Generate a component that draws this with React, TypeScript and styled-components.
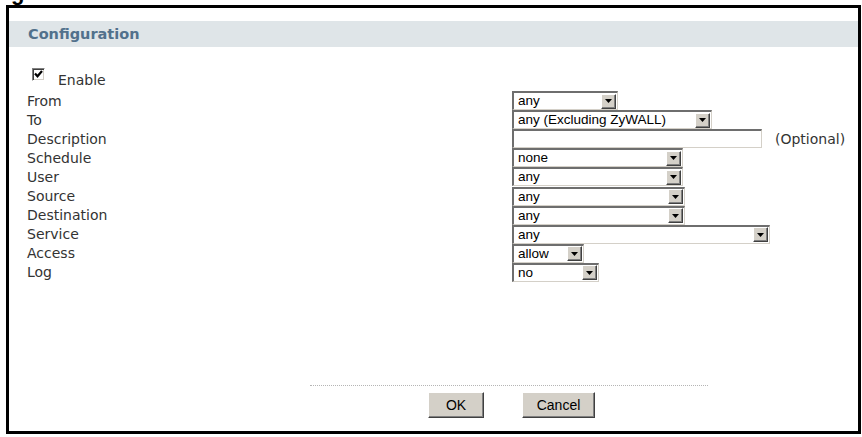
import React from 'react'
import styled, { createGlobalStyle } from 'styled-components'

interface IRow {
  label: string
  kind: 'select' | 'input'
  value?: string
  width: number
}

const rows: IRow[] = [
  { label: 'From', kind: 'select', value: 'any', width: 106 },
  { label: 'To', kind: 'select', value: 'any (Excluding ZyWALL)', width: 200 },
  { label: 'Description', kind: 'input', width: 250 },
  { label: 'Schedule', kind: 'select', value: 'none', width: 171 },
  { label: 'User', kind: 'select', value: 'any', width: 171 },
  { label: 'Source', kind: 'select', value: 'any', width: 173 },
  { label: 'Destination', kind: 'select', value: 'any', width: 173 },
  { label: 'Service', kind: 'select', value: 'any', width: 258 },
  { label: 'Access', kind: 'select', value: 'allow', width: 72 },
  { label: 'Log', kind: 'select', value: 'no', width: 87 },
]

const SelectBox: React.FC<{ value: string; width: number }> = ({ value, width }) => {
  return (
    <StyledSelect width={width}>
      <SelectText>{value}</SelectText>
      <ArrowButton>
        <svg width="7" height="4" viewBox="0 0 7 4">
          <path d="M0 0h7L3.5 4z" fill="#000" />
        </svg>
      </ArrowButton>
    </StyledSelect>
  )
}

const App: React.FC = () => {
  return (
    <>
      <GlobalStyle />
      <Caption>
        <span>g</span>
      </Caption>
      <Frame>
        <Header>Configuration</Header>
        <EnableRow>
          <CheckBox>
            <svg width="9" height="9" viewBox="0 0 9 9">
              <path d="M1 3.5l2.5 2.8L8 1" stroke="#000" strokeWidth="2.2" fill="none" />
            </svg>
          </CheckBox>
          <EnableText>Enable</EnableText>
        </EnableRow>
        <FormGrid>
          {rows.map((row) => (
            <React.Fragment key={row.label}>
              <Label>{row.label}</Label>
              <Control>
                {row.kind === 'select' ? (
                  <SelectBox value={row.value || ''} width={row.width} />
                ) : (
                  <>
                    <TextInput width={row.width} />
                    <Hint>(Optional)</Hint>
                  </>
                )}
              </Control>
            </React.Fragment>
          ))}
        </FormGrid>
        <Footer>
          <Buttons>
            <Button width={56}>OK</Button>
            <Button width={73}>Cancel</Button>
          </Buttons>
        </Footer>
      </Frame>
    </>
  )
}

export default App

const GlobalStyle = createGlobalStyle`
  body {
    margin: 0;
    background: #fff;
    font-family: "DejaVu Sans", Verdana, sans-serif;
  }
`

const Caption = styled.div`
  height: 5px;
  overflow: hidden;
  padding-left: 11px;

  span {
    display: block;
    margin-top: -18px;
    font: bold 22px/22px "Liberation Sans", Arial, sans-serif;
    color: #000;
  }
`

const Frame = styled.div`
  box-sizing: border-box;
  margin-left: 6px;
  width: 855px;
  height: 429px;
  border: 3px solid #000;
  padding-top: 13px;
`

const Header = styled.div`
  height: 26px;
  background: #dfe5e8;
  padding-left: 19px;
  display: flex;
  align-items: center;
  font-size: 14.5px;
  font-weight: bold;
  color: #52718c;
`

const EnableRow = styled.div`
  display: flex;
  margin-top: 19px;
  height: 25px;
  padding-left: 23px;
`

const CheckBox = styled.div`
  box-sizing: border-box;
  width: 13px;
  height: 13px;
  margin-top: 2px;
  background: #fff;
  border: 1px solid;
  border-color: #808080 #fff #fff #808080;
  box-shadow: inset 1px 1px #404040, inset -1px -1px #d4d0c8;
  display: flex;
  align-items: center;
  justify-content: center;
`

const EnableText = styled.span`
  margin-left: 13px;
  margin-top: 6px;
  font-size: 14px;
  line-height: 17px;
  color: #333;
`

const FormGrid = styled.div`
  display: grid;
  grid-template-columns: 485px auto;
  grid-auto-rows: 19.1px;
  padding-left: 18px;
`

const Label = styled.div`
  display: flex;
  align-items: center;
  font-size: 14px;
  color: #333;
`

const Control = styled.div`
  display: flex;
  align-items: center;
`

const StyledSelect = styled.div<{ width: number }>`
  box-sizing: border-box;
  width: ${({ width }) => width}px;
  height: 19px;
  display: flex;
  align-items: center;
  justify-content: space-between;
  background: #fff;
  border-style: solid;
  border-width: 2px 1px 1px 2px;
  border-color: #6e6e6e #d4d0c8 #d4d0c8 #6e6e6e;
  padding: 1px 1px 1px 4px;
`

const SelectText = styled.span`
  font: 13.5px/14px "Liberation Sans", Arial, sans-serif;
  color: #000;
  white-space: nowrap;
`

const ArrowButton = styled.span`
  box-sizing: border-box;
  width: 15px;
  height: 15px;
  display: flex;
  align-items: center;
  justify-content: center;
  background: #d4d0c8;
  border: 1px solid;
  border-color: #fff #404040 #404040 #fff;
  box-shadow: inset -1px -1px #808080;
`

const TextInput = styled.div<{ width: number }>`
  box-sizing: border-box;
  width: ${({ width }) => width}px;
  height: 19px;
  background: #fff;
  border-style: solid;
  border-width: 2px 1px 1px 2px;
  border-color: #6e6e6e #d4d0c8 #d4d0c8 #6e6e6e;
`

const Hint = styled.span`
  margin-left: 13px;
  font-size: 14px;
  color: #333;
`

const Footer = styled.div`
  width: 398px;
  margin-left: 301px;
  margin-top: 103px;
  border-top: 1px dotted #b5b5b5;
`

const Buttons = styled.div`
  display: flex;
  gap: 38px;
  padding-top: 6px;
  padding-left: 118px;
`

const Button = styled.button<{ width: number }>`
  box-sizing: border-box;
  width: ${({ width }) => width}px;
  height: 26px;
  padding: 0;
  background: #d4d0c8;
  border: 1px solid;
  border-color: #fff #404040 #404040 #fff;
  box-shadow: inset -1px -1px #808080;
  font: 14px "Liberation Sans", Arial, sans-serif;
  color: #000;
`
